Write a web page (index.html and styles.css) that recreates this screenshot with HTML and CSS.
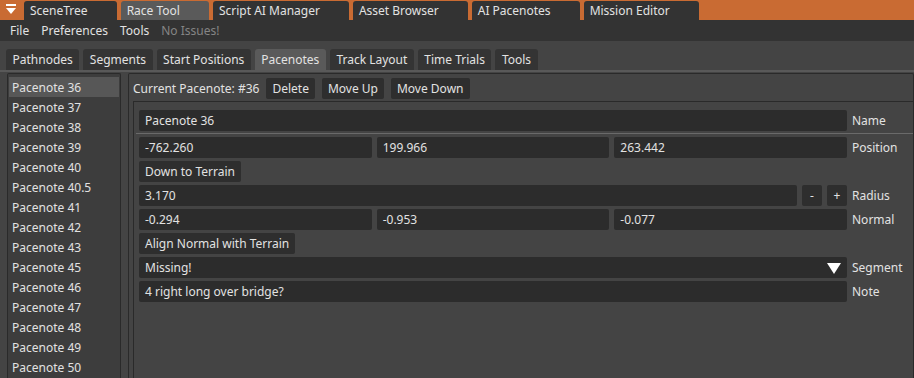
FILE: index.html
```html
<!DOCTYPE html>
<html lang="en">
<head>
    <meta charset="UTF-8">
    <title>Race Tool</title>
    <link rel="stylesheet" href="styles.css">
</head>
<body>

<!-- window tabs -->
<div class="window-bar">
    <div class="window-menu">
        <svg width="12" height="12" viewBox="0 0 12 12">
            <rect x="1" y="0" width="10" height="2" fill="#fff"/>
            <polygon points="1,4 11,4 6,10" fill="#fff"/>
        </svg>
    </div>
    <div class="win-tab">SceneTree</div>
    <div class="win-tab active">Race Tool</div>
    <div class="win-tab">Script AI Manager</div>
    <div class="win-tab">Asset Browser</div>
    <div class="win-tab">AI Pacenotes</div>
    <div class="win-tab">Mission Editor</div>
</div>

<!-- menu -->
<div class="menu-bar">
    <span>File</span>
    <span>Preferences</span>
    <span>Tools</span>
    <span class="muted">No Issues!</span>
</div>

<div class="content">
    <div class="sub-tabs">
        <div class="sub-tab">Pathnodes</div>
        <div class="sub-tab">Segments</div>
        <div class="sub-tab">Start Positions</div>
        <div class="sub-tab active">Pacenotes</div>
        <div class="sub-tab">Track Layout</div>
        <div class="sub-tab">Time Trials</div>
        <div class="sub-tab">Tools</div>
    </div>

    <div class="panels">
        <!-- pacenote list -->
        <div class="list">
            <div class="list-item selected">Pacenote 36</div>
            <div class="list-item">Pacenote 37</div>
            <div class="list-item">Pacenote 38</div>
            <div class="list-item">Pacenote 39</div>
            <div class="list-item">Pacenote 40</div>
            <div class="list-item">Pacenote 40.5</div>
            <div class="list-item">Pacenote 41</div>
            <div class="list-item">Pacenote 42</div>
            <div class="list-item">Pacenote 43</div>
            <div class="list-item">Pacenote 45</div>
            <div class="list-item">Pacenote 46</div>
            <div class="list-item">Pacenote 47</div>
            <div class="list-item">Pacenote 48</div>
            <div class="list-item">Pacenote 49</div>
            <div class="list-item">Pacenote 50</div>
        </div>

        <!-- editor -->
        <div class="editor">
            <div class="editor-head">
                <span class="current">Current Pacenote: #36</span>
                <button class="btn">Delete</button>
                <button class="btn">Move Up</button>
                <button class="btn">Move Down</button>
            </div>

            <div class="form">
                <div class="row">
                    <div class="fields"><div class="input">Pacenote 36</div></div>
                    <div class="label">Name</div>
                </div>
                <div class="sep"></div>
                <div class="row">
                    <div class="fields">
                        <div class="input">-762.260</div>
                        <div class="input">199.966</div>
                        <div class="input">263.442</div>
                    </div>
                    <div class="label">Position</div>
                </div>
                <div class="row">
                    <button class="btn">Down to Terrain</button>
                </div>
                <div class="row">
                    <div class="fields">
                        <div class="input">3.170</div>
                        <button class="btn small">-</button>
                        <button class="btn small">+</button>
                    </div>
                    <div class="label">Radius</div>
                </div>
                <div class="row">
                    <div class="fields">
                        <div class="input">-0.294</div>
                        <div class="input">-0.953</div>
                        <div class="input">-0.077</div>
                    </div>
                    <div class="label">Normal</div>
                </div>
                <div class="row">
                    <button class="btn">Align Normal with Terrain</button>
                </div>
                <div class="row">
                    <div class="fields">
                        <div class="input combo">
                            <span>Missing!</span>
                            <svg width="14" height="12" viewBox="0 0 14 12">
                                <polygon points="0,1 14,1 7,12" fill="#fff"/>
                            </svg>
                        </div>
                    </div>
                    <div class="label">Segment</div>
                </div>
                <div class="row">
                    <div class="fields"><div class="input">4 right long over bridge?</div></div>
                    <div class="label">Note</div>
                </div>
            </div>
        </div>
    </div>
</div>

</body>
</html>
```
FILE: styles.css
```css
/* page */
body {
    margin: 0;
    width: 914px;
    height: 378px;
    overflow: hidden;
    font-family: "Noto Sans", "Open Sans", sans-serif;
    font-size: 12px;
    color: #e2e2e2;
    background-color: #444;
}

/* orange window tab strip */
.window-bar {
    height: 20px;
    background-color: #c96b33;
    display: flex;
    align-items: flex-end;
    gap: 4px;
}
.window-menu {
    width: 22px;
    height: 20px;
    display: flex;
    align-items: center;
    justify-content: center;
    margin-right: -2px;
}
.win-tab {
    height: 19px;
    line-height: 20px;
    padding: 0 29px 0 6px;
    background-color: #333;
    border-radius: 3px 3px 0 0;
}
.win-tab.active {
    background-color: #5a5a5a;
}

/* menu bar */
.menu-bar {
    height: 21px;
    line-height: 21px;
    background-color: #333;
    display: flex;
    gap: 12px;
    padding-left: 10px;
}
.menu-bar .muted {
    color: #858585;
}

/* content */
.content {
    padding-top: 8px;
}
.sub-tabs {
    display: flex;
    gap: 4px;
    padding-left: 6px;
    border-bottom: 2px solid #595959;
}
.sub-tab {
    height: 21px;
    line-height: 22px;
    padding: 0 6.5px;
    background-color: #343434;
    border-radius: 3px 3px 0 0;
}
.sub-tab.active {
    background-color: #5a5a5a;
}

.panels {
    display: flex;
    gap: 7px;
    padding: 1px 0 0 7px;
    height: 305px;
}

/* list on the left */
.list {
    width: 110px;
    border: 1px solid #2a2a2a;
    border-bottom: none;
    border-radius: 2px 2px 0 0;
    padding: 3px 1px 0;
    background-color: #3d3d3d;
    overflow: hidden;
}
.list-item {
    height: 20px;
    line-height: 21px;
    padding-left: 3px;
}
.list-item.selected {
    background-color: #575757;
}

/* editor */
.editor {
    flex: 1;
    display: flex;
    flex-direction: column;
    border: 1px solid #2a2a2a;
    border-bottom: none;
    border-radius: 2px 2px 0 0;
    padding: 3px 0 0 4px;
}
.editor-head {
    display: flex;
    align-items: center;
    gap: 7px;
    height: 22px;
}
.btn {
    font: inherit;
    color: inherit;
    height: 21px;
    padding: 0 6px;
    border: none;
    border-radius: 2px;
    background-color: #2e2e2e;
}
.btn.small {
    width: 20px;
    padding: 0;
}

.form {
    flex: 1;
    margin-top: 2px;
    border: 1px solid #2a2a2a;
    border-right: none;
    border-bottom: none;
    padding: 8px 0 0 5px;
}
.row {
    display: flex;
    align-items: center;
    gap: 5px;
    height: 21px;
    margin-bottom: 3px;
}
.fields {
    display: flex;
    gap: 5px;
    width: 708px;
}
.input {
    flex: 1;
    height: 21px;
    line-height: 21px;
    padding-left: 6px;
    background-color: #2c2c2c;
    border-radius: 2px;
}
.combo {
    display: flex;
    justify-content: space-between;
    align-items: center;
    padding-right: 6px;
}
.label {
    width: 60px;
}
.sep {
    height: 1px;
    background-color: #6a6a6a;
    margin: -1px 0 3px -3px;
}
```
